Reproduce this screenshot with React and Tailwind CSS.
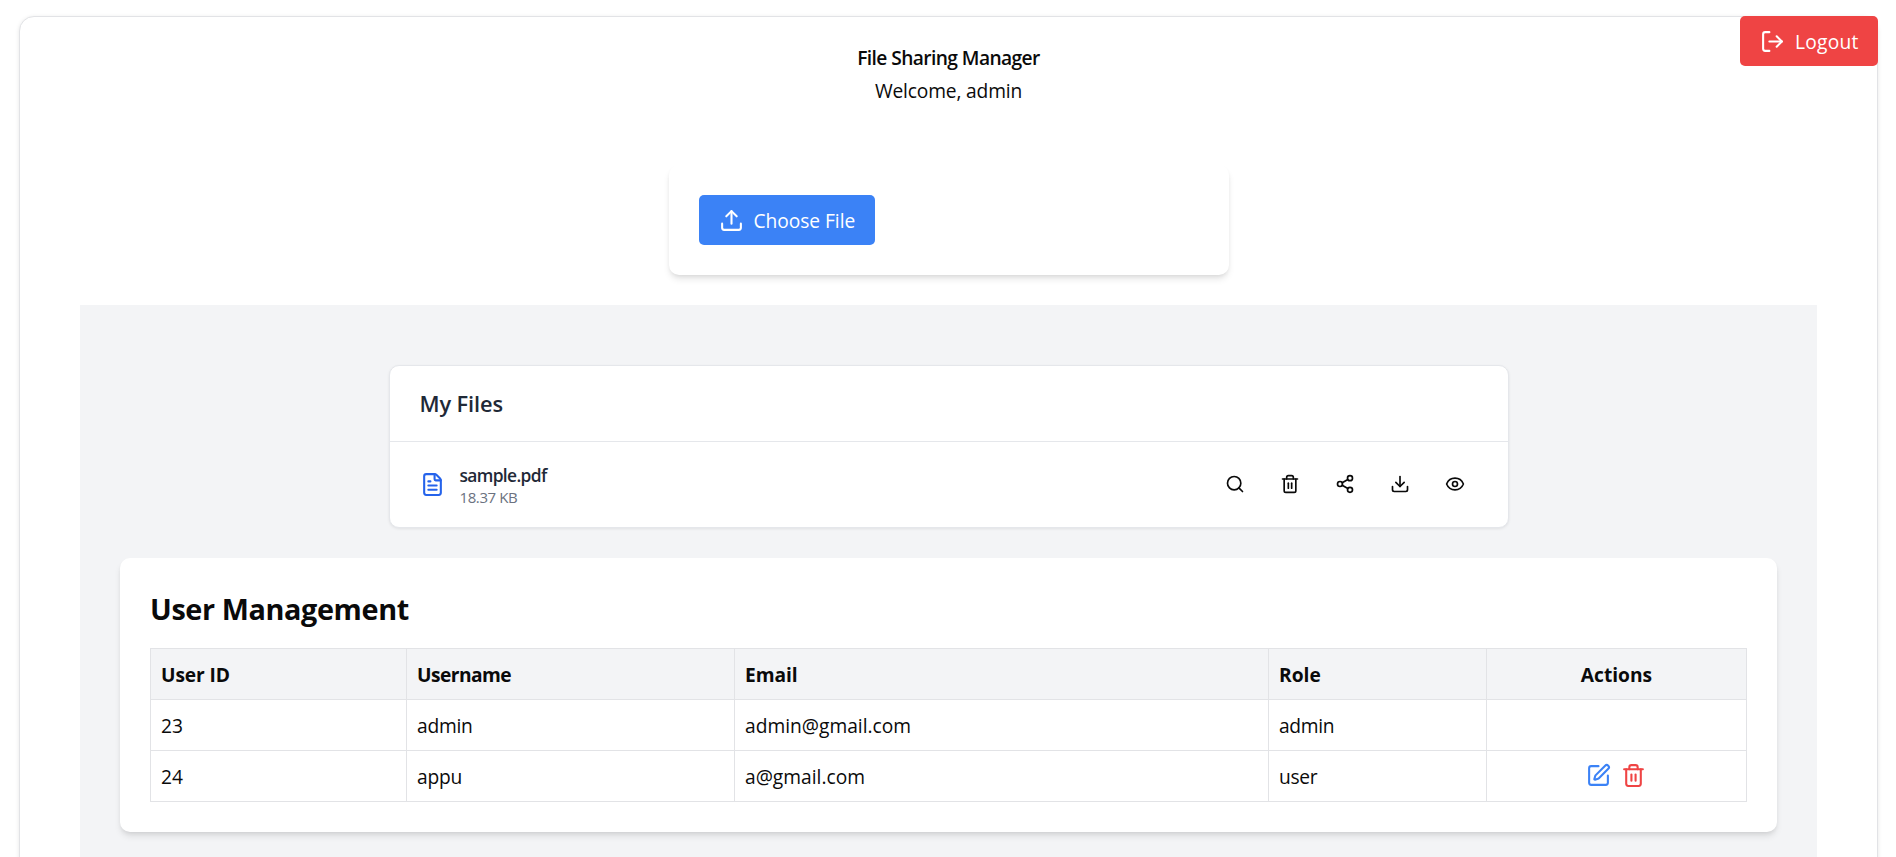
import React from "react";
import { LogOut, Upload, FileText, Search, Trash2, Share2, Download, Eye, SquarePen } from "lucide-react";

const users = [
  { id: 23, username: "admin", email: "admin@gmail.com", role: "admin", editable: false },
  { id: 24, username: "appu", email: "a@gmail.com", role: "user", editable: true },
];

const fileActions = [
  { label: "Search", Icon: Search },
  { label: "Delete", Icon: Trash2 },
  { label: "Share", Icon: Share2 },
  { label: "Download", Icon: Download },
  { label: "View", Icon: Eye },
];

function Header() {
  return (
    <header className="flex flex-col items-center pt-[26px] text-center">
      <h1 className="text-[19.2px] leading-[30px] font-semibold tracking-[-0.59px]">File Sharing Manager</h1>
      <p className="mt-[3px] text-[19.2px] leading-[30px] tracking-[-0.15px]">Welcome, admin</p>
    </header>
  );
}

function UploadCard() {
  return (
    <section className="mx-auto mt-[59px] h-[110px] w-[560px] rounded-[10px] bg-white p-[30px] shadow-[0_5px_7.5px_-1px_rgba(0,0,0,0.1),0_2.5px_5px_-2.5px_rgba(0,0,0,0.1)]">
      <button className="flex h-[50px] w-[176px] items-center gap-[10px] rounded-[5px] bg-[#3b82f6] pl-5 text-[19.2px] text-white">
        <Upload size={25} className="shrink-0" />
        <span className="pt-[3px] tracking-[-0.05px] whitespace-nowrap">Choose File</span>
      </button>
    </section>
  );
}

function FilesCard() {
  return (
    <section className="mx-auto w-[1120px] rounded-[10px] border border-[#e5e7eb] bg-white shadow-[0_1px_3px_rgba(0,0,0,0.08)]">
      <div className="flex h-[76px] items-center border-b border-[#e5e7eb] px-[30px]">
        <h2 className="pt-px text-[21.8px] font-semibold tracking-[-0.1px] text-[#1f2937]">My Files</h2>
      </div>
      <div className="flex h-[85px] items-center px-[30px]">
        <FileText size={25} className="shrink-0 text-[#2563eb]" />
        <div className="ml-[15px] flex-1 pt-[3px]">
          <p className="text-[17.4px] leading-[22px] font-semibold tracking-[-0.65px] text-[#1f2937]">sample.pdf</p>
          <p className="text-[15px] leading-[22px] tracking-[-0.4px] text-[#6b7280]">18.37 KB</p>
        </div>
        <div className="flex gap-[10px] pb-[2px]">
          {fileActions.map(({ label, Icon }) => (
            <button key={label} aria-label={label} className="flex h-[45px] w-[45px] items-center justify-center">
              <Icon size={20} />
            </button>
          ))}
        </div>
      </div>
    </section>
  );
}

function UserManagement() {
  return (
    <section className="mx-10 mt-[30px] h-[274px] rounded-[10px] bg-white px-[30px] pt-[30px] shadow-[0_5px_7.5px_-1px_rgba(0,0,0,0.1),0_2.5px_5px_-2.5px_rgba(0,0,0,0.1)]">
      <h2 className="h-[60px] text-[28.8px] leading-[42px] font-bold tracking-[-0.38px]">User Management</h2>
      <table className="w-[1597px] table-fixed border-collapse text-left text-[19.2px] [&_td]:border [&_td]:border-[#e2e3e6] [&_td]:px-[10px] [&_td]:pt-[2px] [&_td]:pb-0 [&_th]:border [&_th]:border-[#e2e3e6] [&_th]:px-[10px] [&_th]:pt-[2px] [&_th]:pb-0">
        <colgroup>
          <col className="w-[256px]" />
          <col className="w-[328px]" />
          <col className="w-[534px]" />
          <col className="w-[218px]" />
          <col className="w-[260px]" />
        </colgroup>
        <thead>
          <tr className="h-[51px] bg-[#f3f4f6]">
            <th className="tracking-[-0.1px]">User ID</th>
            <th className="tracking-[-0.55px]">Username</th>
            <th className="tracking-[-0.1px]">Email</th>
            <th>Role</th>
            <th className="text-center">Actions</th>
          </tr>
        </thead>
        <tbody>
          {users.map((user) => (
            <tr key={user.id} className="h-[51px]">
              <td>{user.id}</td>
              <td className="tracking-[-0.25px]">{user.username}</td>
              <td>{user.email}</td>
              <td className="tracking-[-0.3px]">{user.role}</td>
              <td>
                {user.editable && (
                  <div className="flex justify-center gap-[10px] pr-[2px] pb-[4px]">
                    <button aria-label="Edit" className="text-[#3b82f6]">
                      <SquarePen size={25} />
                    </button>
                    <button aria-label="Delete" className="text-[#ef4444]">
                      <Trash2 size={25} />
                    </button>
                  </div>
                )}
              </td>
            </tr>
          ))}
        </tbody>
      </table>
    </section>
  );
}

export default function App() {
  return (
    <div className="relative h-[857px] w-[1896px] overflow-hidden bg-white pt-4 pl-[19px] font-['Open_Sans','Noto_Sans',sans-serif] text-[#0a0a0a]">
      <main className="h-[1000px] w-[1859px] rounded-[15px] border border-[#e2e3e6] bg-white shadow-[0_1px_4px_rgba(0,0,0,0.1)]">
        <Header />
        <UploadCard />
        <div className="mx-[60px] mt-[30px] h-[700px] bg-[#f3f4f6] pt-[60px]">
          <FilesCard />
          <UserManagement />
        </div>
      </main>
      <button className="absolute top-4 left-[1740px] flex h-[50px] w-[138px] items-center gap-[10px] rounded-[5px] bg-[#ef4444] pl-5 text-[19.2px] text-white">
        <LogOut size={25} className="shrink-0" />
        <span className="pt-[3px] tracking-[0.25px]">Logout</span>
      </button>
    </div>
  );
}
